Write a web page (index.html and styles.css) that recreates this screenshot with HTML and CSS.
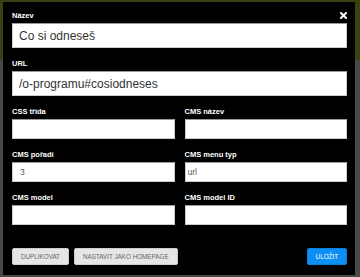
FILE: index.html
```html
<!DOCTYPE html>
<html lang="cs">

<head>
    <meta charset="UTF-8">
    <meta name="viewport" content="width=device-width, initial-scale=1.0">
    <title>Upravit položku menu</title>
    <link rel="stylesheet" href="styles.css">
</head>

<body>
    <div class="modal">
        <button class="close" title="Zavřít">
            <svg width="7" height="7" viewBox="0 0 7 7">
                <path d="M1 1L6 6M6 1L1 6" stroke="#fff" stroke-width="2" stroke-linecap="square" />
            </svg>
        </button>

        <div class="field">
            <label for="nazev">Název</label>
            <input type="text" id="nazev" class="big" value="Co si odneseš">
        </div>

        <div class="field">
            <label for="url">URL</label>
            <input type="text" id="url" class="big" value="/o-programu#cosiodneses">
        </div>

        <div class="grid">
            <div class="field">
                <label for="css">CSS třída</label>
                <input type="text" id="css">
            </div>
            <div class="field">
                <label for="cmsnazev">CMS název</label>
                <input type="text" id="cmsnazev">
            </div>
            <div class="field">
                <label for="poradi">CMS pořadí</label>
                <input type="text" id="poradi" value="3">
            </div>
            <div class="field">
                <label for="typ">CMS menu typ</label>
                <input type="text" id="typ" class="tight" value="url">
            </div>
            <div class="field">
                <label for="model">CMS model</label>
                <input type="text" id="model">
            </div>
            <div class="field">
                <label for="modelid">CMS model ID</label>
                <input type="text" id="modelid">
            </div>
        </div>

        <div class="actions">
            <button class="btn">Duplikovat</button>
            <button class="btn">Nastavit jako homepage</button>
            <button class="btn primary">Uložit</button>
        </div>
    </div>
</body>

</html>
```

FILE: styles.css
```css
body {
    font-family: "Liberation Sans", Arial, sans-serif;
    background: linear-gradient(#3a4112 0, #3a4112 60px, #484848 60px);
    margin: 0;
    padding: 2px 5px 2px 3px;
    height: 277px;
    box-sizing: border-box;
    overflow: hidden;
}

.modal {
    position: relative;
    background-color: #000;
    height: 273px;
    padding: 9px 8px 10px 9px;
    box-sizing: border-box;
    display: flex;
    flex-direction: column;
}

.close {
    position: absolute;
    top: 10px;
    right: 8px;
    background: none;
    border: none;
    padding: 0;
    line-height: 0;
    cursor: pointer;
}

.field {
    display: flex;
    flex-direction: column;
    margin-bottom: 11px;
}

label {
    color: #fff;
    font-size: 7.5px;
    font-weight: bold;
    line-height: 10px;
    margin-bottom: 2px;
}

input[type="text"] {
    height: 20px;
    border: 1px solid #ccc;
    border-top-color: #999;
    background: #fff;
    padding: 0 7px;
    box-sizing: border-box;
    font-family: inherit;
    font-size: 8.5px;
    color: #555;
    outline: none;
    margin: 0;
}

input.big {
    height: 25px;
    font-size: 12px;
    color: #333;
    padding: 0 6px;
}

input.tight {
    padding: 0 2px;
}

.grid {
    display: grid;
    grid-template-columns: 1fr 1fr;
    column-gap: 10px;
}

.actions {
    margin-top: auto;
    display: flex;
    gap: 5px;
}

.btn {
    height: 17px;
    padding: 0 8px;
    background-color: #e6e6e6;
    border: 1px solid #ccc;
    border-radius: 2px;
    color: #666;
    font-family: inherit;
    font-size: 6.3px;
    text-transform: uppercase;
    cursor: pointer;
}

.btn.primary {
    margin-left: auto;
    background-color: #0c8ef2;
    border-color: #0a7fd8;
    color: #fff;
}
```
